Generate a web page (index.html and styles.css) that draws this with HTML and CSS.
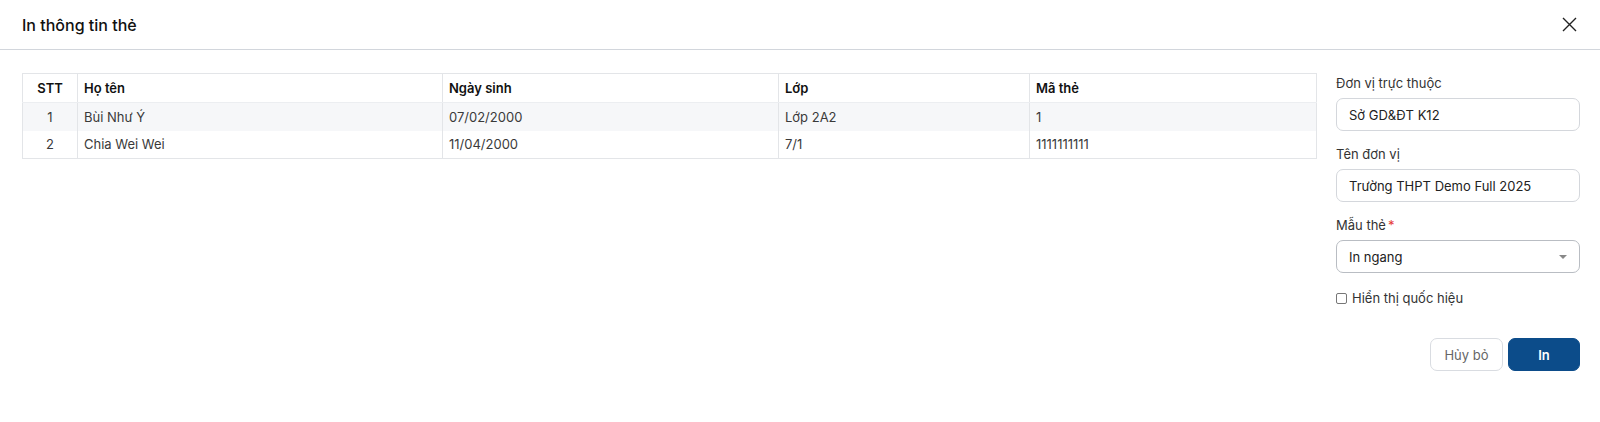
FILE: index.html
```html
<!DOCTYPE html>
<html lang="vi">
<head>
<meta charset="utf-8">
<title>In thông tin thẻ</title>
<link rel="stylesheet" href="styles.css">
</head>
<body>
<div class="modal">
  <div class="modal-header">
    <div class="modal-title">In thông tin thẻ</div>
    <button class="close" aria-label="Đóng">
      <svg width="15" height="15" viewBox="0 0 15 15"><path d="M1 1L14 14M14 1L1 14" stroke="#222" stroke-width="1.4" fill="none"/></svg>
    </button>
  </div>
  <div class="modal-body">
    <div class="table-wrap">
      <table class="grid">
        <colgroup>
          <col style="width:55px"><col style="width:365px"><col style="width:336px"><col style="width:251px"><col style="width:287px">
        </colgroup>
        <thead>
          <tr><th class="c">STT</th><th>Họ tên</th><th>Ngày sinh</th><th>Lớp</th><th>Mã thẻ</th></tr>
        </thead>
        <tbody>
          <tr class="alt"><td class="c">1</td><td>Bùi Như Ý</td><td>07/02/2000</td><td>Lớp 2A2</td><td>1</td></tr>
          <tr><td class="c">2</td><td>Chia Wei Wei</td><td>11/04/2000</td><td>7/1</td><td>1111111111</td></tr>
        </tbody>
      </table>
    </div>
    <div class="side">
      <div class="field">
        <div class="label">Đơn vị trực thuộc</div>
        <div class="input">Sở GD&amp;ĐT K12</div>
      </div>
      <div class="field">
        <div class="label">Tên đơn vị</div>
        <div class="input">Trường THPT Demo Full 2025</div>
      </div>
      <div class="field">
        <div class="label">Mẫu thẻ<span class="req">*</span></div>
        <div class="input select">In ngang<span class="caret"></span></div>
      </div>
      <label class="check"><span class="box"></span>Hiển thị quốc hiệu</label>
      <div class="actions">
        <button class="btn btn-cancel">Hủy bỏ</button>
        <button class="btn btn-primary">In</button>
      </div>
    </div>
  </div>
</div>
</body>
</html>
```

FILE: styles.css
```css
* { box-sizing: border-box; }
html, body { margin: 0; background: #fff; }
body {
  font-family: Inter, "Noto Sans", "Liberation Sans", sans-serif;
  font-size: 13px;
  color: #333;
}
.modal { width: 1600px; height: 422px; }
.modal-header {
  height: 50px;
  border-bottom: 1px solid #d2d6dc;
  display: flex;
  align-items: center;
  justify-content: space-between;
  padding: 0 22px 0 22px;
}
.modal-title { font-size: 16px; font-weight: 500; color: #111; }
.close {
  border: 0; background: none; padding: 0; margin-right: 1px;
  display: flex; cursor: pointer;
}
.modal-body {
  display: flex;
  gap: 19px;
  padding: 23px 21px 0 22px;
}
.table-wrap { flex: 1; }
.grid {
  width: 100%;
  border-collapse: collapse;
  table-layout: fixed;
  border: 1px solid #e3e5e8;
}
.grid th, .grid td {
  height: 28px;
  padding: 0 6px;
  text-align: left;
  border-left: 1px solid #e3e5e8;
  white-space: nowrap;
}
.grid th { font-weight: 600; color: #111; height: 29px; border-bottom: 1px solid #eceef1; }
.grid td { color: #3a3a3a; }
.grid .c { text-align: center; }
.grid tr.alt td { background: #f6f7f9; }
.side { width: 244px; flex: none; }
.field { margin-bottom: 14px; }
.label { line-height: 18px; margin-bottom: 6px; color: #333; margin-top: 1px; }
.req { color: #e53935; margin-left: 2px; }
.input {
  height: 33px;
  border: 1px solid #d4d7dc;
  border-radius: 7px;
  padding: 0 12px;
  display: flex;
  align-items: center;
  color: #222;
}
.select { justify-content: space-between; padding-right: 12px; border-color: #b9bdc3; }
.caret {
  width: 0; height: 0;
  border-left: 4px solid transparent;
  border-right: 4px solid transparent;
  border-top: 4px solid #888;
}
.check {
  display: flex; align-items: center; gap: 5px;
  line-height: 18px; margin-top: 16px; color: #333;
}
.box {
  width: 11px; height: 11px;
  border: 1px solid #777; border-radius: 2px;
  background: #fff;
}
.actions {
  display: flex; justify-content: flex-end; gap: 5px;
  margin-top: 31px;
}
.btn {
  height: 33px;
  border-radius: 7px;
  font-family: inherit;
  font-size: 13px;
  cursor: pointer;
}
.btn-cancel {
  width: 73px; background: #fff; border: 1px solid #d9dce1; color: #666;
}
.btn-primary {
  width: 72px; background: #0c4c8a; border: 1px solid #0c4c8a; color: #fff; font-weight: 600;
}
```
